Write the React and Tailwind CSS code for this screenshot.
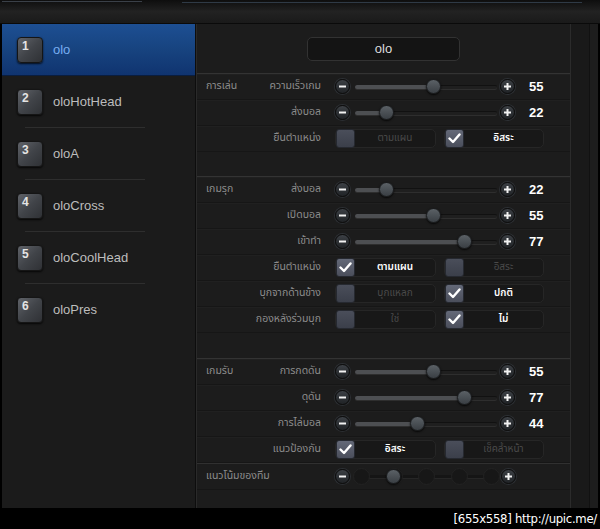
import React from 'react'

const thai = { fontFamily: '"Noto Sans Thai", "Noto Sans", "DejaVu Sans", sans-serif' }

const players = ['olo', 'oloHotHead', 'oloA', 'oloCross', 'oloCoolHead', 'oloPres']

const Badge = ({ n }) => (
  <div className="w-[26px] h-[26px] rounded-[4px] border border-[#151515] bg-gradient-to-br from-[#606369] via-[#414449] to-[#2f3135] shadow-[0_1px_2px_rgba(0,0,0,0.8)] pl-[4px] pt-[1px] text-[12px] font-bold text-[#e4e4e4] leading-[14px]">
    {n}
  </div>
)

const RoundBtn = ({ plus }) => (
  <div className="w-[15px] h-[15px] rounded-full bg-gradient-to-b from-[#3c4045] to-[#202326] border border-[#0d0d0d] shadow-[0_0_0_1px_#2c2f33] flex items-center justify-center shrink-0">
    <svg width="9" height="9" viewBox="0 0 9 9">
      <rect x="1" y="3.5" width="7" height="2" fill="#f2f2f2" />
      {plus && <rect x="3.5" y="1" width="2" height="7" fill="#f2f2f2" />}
    </svg>
  </div>
)

const Thumb = () => (
  <div className="w-[15px] h-[15px] rounded-full bg-gradient-to-b from-[#5b6166] to-[#3a3f44] border border-[#1a1c1e] shadow-[0_1px_2px_rgba(0,0,0,0.8)]" />
)

const Slider = ({ value }) => (
  <div className="flex items-center">
    <RoundBtn />
    <div className="relative ml-[5px] w-[142px] h-[15px]">
      <div className="absolute left-0 right-0 top-[6px] h-[4px] rounded-full bg-[#1f1f1f] border-t border-[#111] shadow-[0_1px_0_#2e2e2e]" />
      <div className="absolute left-0 top-[6px] h-[4px] rounded-full bg-[#4d4f52]" style={{ width: `${value}%` }} />
      <div className="absolute top-0" style={{ left: `calc(${value}% - 7px)` }}>
        <Thumb />
      </div>
    </div>
    <div className="ml-[3px]"><RoundBtn plus /></div>
    <span className="ml-[14px] text-[13px] font-bold text-white font-['Liberation_Sans',sans-serif]">{value}</span>
  </div>
)

const Check = ({ on }) => (
  <div className={`w-[19px] h-[19px] rounded-[3px] border border-[#262930] flex items-center justify-center shrink-0 ${on ? 'bg-gradient-to-b from-[#646978] to-[#4a4e5b]' : 'bg-gradient-to-b from-[#4a4e5a] to-[#3b3f4a]'}`}>
    {on && (
      <svg width="13" height="11" viewBox="0 0 13 11">
        <path d="M1.5 5.5 L5 9 L11.5 1.5" stroke="#fff" strokeWidth="2.4" fill="none" strokeLinecap="round" strokeLinejoin="round" />
      </svg>
    )}
  </div>
)

const Option = ({ on, label, w }) => (
  <div className={`flex items-center h-[19px] rounded-[5px] border border-[#262626] bg-[#181818] ${w}`}>
    <Check on={on} />
    <span className={`flex-1 text-center text-[10px] ${on ? 'text-white font-semibold' : 'text-[#4a4a4a]'}`} style={thai}>{label}</span>
  </div>
)

const Choice = ({ a, b, pick }) => (
  <div className="flex items-center gap-[8px]">
    <Option on={pick === 0} label={a} w="w-[101px]" />
    <Option on={pick === 1} label={b} w="w-[100px]" />
  </div>
)

const Row = ({ section, label, children }) => (
  <div className="flex items-center h-[26px] border-b border-[#161616] shadow-[inset_0_1px_0_#202020]">
    <div className="w-[124px] pl-[9px] flex justify-between items-center text-[10.5px] text-[#8c8c8c] whitespace-nowrap" style={thai}>
      <span>{section}</span>
      <span>{label}</span>
    </div>
    <div className="ml-[14px]">{children}</div>
  </div>
)

const Gap = ({ h }) => <div className={`${h} border-b border-[#161616]`} />

export default function App() {
  return (
    <div className="w-[600px] h-[529px] bg-black flex flex-col overflow-hidden font-['Liberation_Sans',sans-serif]">
      {/* top bar */}
      <div className="h-[24px] shrink-0 bg-gradient-to-b from-[#0e0e0e] via-[#222] to-[#1a1a1a] border-b border-[#0a0a0a] flex items-start">
        <div className="mt-[1px] ml-[2px] w-[140px] h-[1px] bg-[#3a4048]" />
        <div className="mt-[2px] ml-[40px] w-[400px] h-[1px] bg-[#2f3a46]" />
      </div>

      <div className="flex h-[484px] shrink-0 pl-[2px]">
        {/* sidebar */}
        <div className="w-[194px] shrink-0 bg-[#1b1b1b] border-r border-[#0d0d0d] flex flex-col">
          {players.map((p, i) => (
            <div
              key={p}
              className={`h-[52px] flex items-center pl-[15px] relative ${i === 0 ? 'bg-gradient-to-b from-[#1d4f93] via-[#17437f] to-[#103470] border-b border-[#0a1e40]' : ''}`}
            >
              <Badge n={i + 1} />
              <span className={`ml-[10px] text-[13px] ${i === 0 ? 'text-[#77adf2]' : 'text-[#bdbdbd]'}`}>{p}</span>
              {i > 0 && i < 5 && <div className="absolute bottom-0 left-[23px] w-[120px] h-[1px] bg-[#2e2e2e]" />}
            </div>
          ))}
        </div>

        {/* main panel */}
        <div className="w-[374px] shrink-0 bg-[#1c1c1c] border-l border-[#2a2a2a] flex flex-col">
          <div className="h-[50px] flex items-center justify-center border-b border-[#333]">
            <div className="w-[153px] h-[24px] rounded-[5px] bg-[#141414] border border-[#323232] flex items-center justify-center text-[13px] text-[#dcdcdc]">
              olo
            </div>
          </div>

          <Row section="การเล่น" label="ความเร็วเกม"><Slider value={55} /></Row>
          <Row label="ส่งบอล"><Slider value={22} /></Row>
          <Row label="ยืนตำแหน่ง"><Choice a="ตามแผน" b="อิสระ" pick={1} /></Row>
          <Gap h="h-[25px] border-b-[#333]" />

          <Row section="เกมรุก" label="ส่งบอล"><Slider value={22} /></Row>
          <Row label="เปิดบอล"><Slider value={55} /></Row>
          <Row label="เข้าทำ"><Slider value={77} /></Row>
          <Row label="ยืนตำแหน่ง"><Choice a="ตามแผน" b="อิสระ" pick={0} /></Row>
          <Row label="บุกจากด้านข้าง"><Choice a="บุกแหลก" b="ปกติ" pick={1} /></Row>
          <Row label="กองหลังร่วมบุก"><Choice a="ใช่" b="ไม่" pick={1} /></Row>
          <Gap h="h-[26px] border-b-[#333]" />

          <Row section="เกมรับ" label="การกดดัน"><Slider value={55} /></Row>
          <Row label="ดุดัน"><Slider value={77} /></Row>
          <Row label="การไล่บอล"><Slider value={44} /></Row>
          <Row label="แนวป้องกัน"><Choice a="อิสระ" b="เช็คล้ำหน้า" pick={0} /></Row>

          <div className="flex items-center h-[26px] border-t border-[#303030]">
            <div className="w-[124px] pl-[9px] text-[10.5px] text-[#8c8c8c]" style={thai}>แนวโน้มของทีม</div>
            <div className="ml-[14px] flex items-center">
              <RoundBtn />
              <div className="relative ml-[3px] w-[147px] h-[17px]">
                <div className="absolute left-[10px] right-[10px] top-[7px] h-[3px] bg-[#151515] shadow-[0_1px_0_#262626]" />
                {[0, 1, 2, 3, 4].map(s => (
                  <div key={s} className="absolute top-0 w-[17px] h-[17px] rounded-full bg-[#171717] border border-[#222]" style={{ left: s * 32.5 }} />
                ))}
                <div className="absolute top-[1px] left-[33px]"><Thumb /></div>
              </div>
              <div className="ml-[1px]"><RoundBtn plus /></div>
            </div>
          </div>
          <div className="flex-1 border-t border-[#161616]" />
        </div>

        {/* right strip */}
        <div className="w-[28px] shrink-0 bg-[#191919] border-l border-[#2b2b2b] flex">
          <div className="w-[19px] border-r border-[#111]" />
          <div className="flex-1 bg-[#1d1d1d]" />
        </div>
      </div>

      {/* watermark bar */}
      <div className="h-[21px] shrink-0 bg-black flex items-center justify-end pr-[3px]">
        <span className="text-[13px] text-white font-['DejaVu_Sans_Condensed','DejaVu_Sans',sans-serif] tracking-[-0.3px]">[655x558] http://upic.me/</span>
      </div>
    </div>
  )
}
